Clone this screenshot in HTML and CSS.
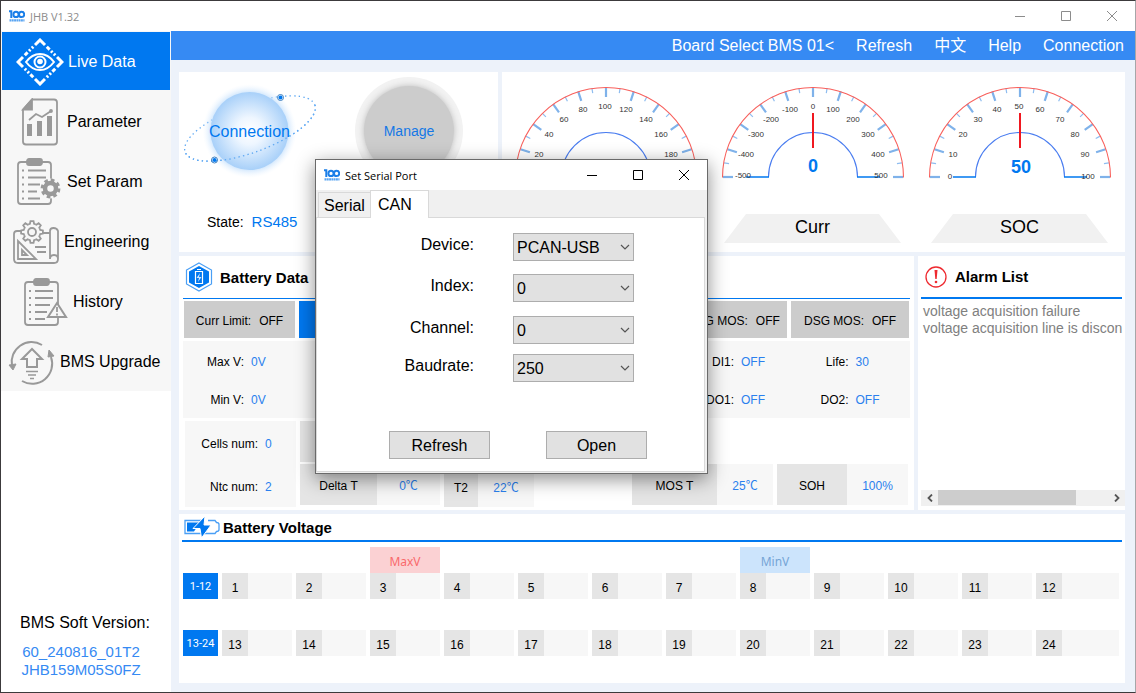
FILE: index.html
```html
<!DOCTYPE html>
<html lang="en">
<head>
<meta charset="utf-8">
<title>JHB V1.32</title>
<link rel="stylesheet" href="styles.css">
</head>
<body>
<svg class="defs" aria-hidden="true">
  <defs>
    <symbol id="logo" viewBox="0 0 16 12">
      <path d="M0 1.200h2.300V8" fill="none" stroke="#1b7fe8" stroke-width="2"/>
      <circle cx="7" cy="4.400" r="2.600" fill="none" stroke="#1b7fe8" stroke-width="2"/>
      <circle cx="12.600" cy="4.400" r="2.600" fill="none" stroke="#1b7fe8" stroke-width="2"/>
      <path d="M.5 10.400h15" stroke="#5aa5f2" stroke-width="2.200" stroke-dasharray="1.900 .4"/>
    </symbol>
    <symbol id="minimize" viewBox="0 0 12 12"><path d="M1 6.500h10" stroke="currentColor"/></symbol>
    <symbol id="maximize" viewBox="0 0 12 12"><path d="M1.500 1.500h9v9h-9z" fill="none" stroke="currentColor"/></symbol>
    <symbol id="close" viewBox="0 0 12 12"><path d="M1 1l10 10M11 1L1 11" stroke="currentColor"/></symbol>
    <symbol id="chevron" viewBox="0 0 10 6"><path d="M1 1l4 4 4-4" fill="none" stroke="#555" stroke-width="1.200"/></symbol>
    <path id="cog-tooth" d="M-3.250-7.850L-2.060-8.250-1.530-10.900H1.530L2.060-8.250 3.250-7.850"/>
    <symbol id="dial" viewBox="0 0 184 100">
      <g stroke="#7fb2ea" stroke-width="2.200">
        <path d="M2 92h10"/>
        <path d="M2 92h10" transform="rotate(18 92 92)"/>
        <path d="M2 92h10" transform="rotate(36 92 92)"/>
        <path d="M2 92h10" transform="rotate(54 92 92)"/>
        <path d="M2 92h10" transform="rotate(72 92 92)"/>
        <path d="M2 92h10" transform="rotate(90 92 92)"/>
        <path d="M2 92h10" transform="rotate(108 92 92)"/>
        <path d="M2 92h10" transform="rotate(126 92 92)"/>
        <path d="M2 92h10" transform="rotate(144 92 92)"/>
        <path d="M2 92h10" transform="rotate(162 92 92)"/>
        <path d="M2 92h10" transform="rotate(180 92 92)"/>
      </g>
      <g stroke="#8fbdf0" stroke-width="1.200">
        <path d="M2 92h5" transform="rotate(9 92 92)"/>
        <path d="M2 92h5" transform="rotate(27 92 92)"/>
        <path d="M2 92h5" transform="rotate(45 92 92)"/>
        <path d="M2 92h5" transform="rotate(63 92 92)"/>
        <path d="M2 92h5" transform="rotate(81 92 92)"/>
        <path d="M2 92h5" transform="rotate(99 92 92)"/>
        <path d="M2 92h5" transform="rotate(117 92 92)"/>
        <path d="M2 92h5" transform="rotate(135 92 92)"/>
        <path d="M2 92h5" transform="rotate(153 92 92)"/>
        <path d="M2 92h5" transform="rotate(171 92 92)"/>
      </g>
      <path d="M1.500 92.500a90.500 90 0 0 1 181 0" fill="none" stroke="#f8605c" stroke-width="1.100"/>
      <path d="M47.500 92a44.500 44.500 0 0 1 89 0" fill="none" stroke="#4a7df0" stroke-width="1.100"/>
      <path d="M25 92h23M136 92h23" stroke="#0078f0" stroke-width="1.300"/>
    </symbol>
    <radialGradient id="sphere">
      <stop offset="0" stop-color="#fff"/>
      <stop offset=".35" stop-color="#eef6ff"/>
      <stop offset="1" stop-color="#a8d0f9"/>
    </radialGradient>
    <radialGradient id="glow">
      <stop offset=".8" stop-color="#b5d8fb" stop-opacity=".7"/>
      <stop offset="1" stop-color="#e8f3ff" stop-opacity="0"/>
    </radialGradient>
  </defs>
</svg>

<div class="window">
  <header class="titlebar">
    <svg class="logo" aria-hidden="true"><use href="#logo"/></svg>
    <span class="titlebar-text">JHB V1.32</span>
    <div class="controls">
      <button class="control" aria-label="Minimize"><svg class="control-icon"><use href="#minimize"/></svg></button>
      <button class="control" aria-label="Maximize"><svg class="control-icon"><use href="#maximize"/></svg></button>
      <button class="control" aria-label="Close"><svg class="control-icon"><use href="#close"/></svg></button>
    </div>
  </header>

  <div class="body">
    <aside class="sidebar">
      <nav class="nav">
        <a class="nav-item active" href="#live">
          <svg class="nav-icon" viewBox="0 0 48 48" fill="none" stroke="#fff">
            <path d="M24 2l22 22-22 22L2 24z" stroke-width="3" stroke-dasharray="14.100 2.500 4 2 2 2 2 2.500" stroke-dashoffset="7"/>
            <path d="M10 24q6-8 14-8t14 8q-6 8-14 8t-14-8z" stroke-width="2"/>
            <circle cx="24" cy="24" r="5.500" stroke-width="2"/>
            <circle cx="24" cy="23.500" r="2.800" fill="#fff" stroke="none"/>
          </svg>Live Data</a>
        <a class="nav-item" href="#parameter">
          <svg class="nav-icon" viewBox="0 0 48 48" fill="none" stroke="#999" stroke-width="1.800">
            <path d="M17 1.500h22q3 0 3 3v39q0 3-3 3H11q-3 0-3-3v-32z"/>
            <path d="M17 1.500v10H8z" fill="#999"/>
            <path d="M12 26h5v12h-5zM22 23h5v15h-5zM32 18h5v20h-5z" fill="#999" stroke="none"/>
            <path d="M14 22l7-6 6 3 9-6"/>
            <circle cx="36" cy="13" r="1" fill="#999"/>
          </svg>Parameter</a>
        <a class="nav-item" href="#set">
          <svg class="nav-icon" viewBox="0 0 48 48" fill="none" stroke="#999" stroke-width="1.800">
            <rect x="3" y="4" width="33" height="42" rx="3"/>
            <rect x="12" y="1" width="15" height="6" rx="2" fill="#999"/>
            <path d="M13 12.500h18M13 19.500h18M13 26.500h12M13 33.500h9M13 40.500h12"/>
            <path d="M7 12.500h2M7 19.500h2M7 26.500h2M7 33.500h2M7 40.500h2"/>
            <circle cx="35.500" cy="30.500" r="10" fill="#f7f7f7" stroke="none"/>
            <circle cx="35.500" cy="30.500" r="5.500" stroke-width="4.500"/>
            <circle cx="35.500" cy="30.500" r="8.500" stroke-width="2.800" stroke-dasharray="3.700 2.976"/>
          </svg>Set Param</a>
        <a class="nav-item inset-12" href="#engineering">
          <svg class="nav-icon" viewBox="0 0 48 48" fill="none" stroke="#999" stroke-width="1.800">
            <path d="M9 13H5q-3 0-3 3v25q0 4 4 4h36q4 0 4-4t-4-4q-4 0-4 4V13q0-3 3.500-3t4.500 3v28M31 15h7"/>
            <path d="M6 23v18h18zM10 32v5h5z"/>
            <path d="M23 29h11M25 34h9"/>
            <circle cx="20" cy="14" r="10" fill="#f7f7f7" stroke="none"/>
            <g transform="translate(20 14)">
              <use href="#cog-tooth"/>
              <use href="#cog-tooth" transform="rotate(45)"/>
              <use href="#cog-tooth" transform="rotate(90)"/>
              <use href="#cog-tooth" transform="rotate(135)"/>
              <use href="#cog-tooth" transform="rotate(180)"/>
              <use href="#cog-tooth" transform="rotate(225)"/>
              <use href="#cog-tooth" transform="rotate(270)"/>
              <use href="#cog-tooth" transform="rotate(315)"/>
            </g>
            <circle cx="20" cy="14" r="4"/>
          </svg>Engineering</a>
        <a class="nav-item inset-20" href="#history">
          <svg class="nav-icon" viewBox="0 0 48 48" fill="none" stroke="#999" stroke-width="1.800">
            <rect x="4" y="4" width="33" height="43" rx="3"/>
            <rect x="13" y="1" width="15" height="6" rx="2" fill="#999"/>
            <path d="M14 13h18M14 20h18M14 27h15M14 34h12M14 41h10"/>
            <path d="M8 13h2M8 20h2M8 27h2M8 34h2M8 41h2"/>
            <path d="M36 25l9 14H27z" fill="#f7f7f7" stroke-width="2"/>
            <path d="M36 29v5M36 35.500v2"/>
          </svg>History</a>
        <a class="nav-item inset-8" href="#upgrade">
          <svg class="nav-icon" viewBox="0 0 48 48" fill="none" stroke="#999" stroke-width="2">
            <path d="M34 7A20 20 0 0 0 4 28M14 43a20 20 0 0 0 29-24"/>
            <path d="M1 27l7-1-3 6zM40 19l6-1-5-6z" fill="#999" stroke-width="1"/>
            <path d="M24 11L14 21h5v8h10v-8h5z"/>
            <path d="M18 33.500h12M20 37h8M22 40.500h4" stroke-width="1.600"/>
          </svg>BMS Upgrade</a>
      </nav>
      <div class="version">
        <div class="version-title">BMS Soft Version:</div>
        <div class="version-code">60_240816_01T2</div>
        <div class="version-code">JHB159M05S0FZ</div>
      </div>
    </aside>

    <div class="content">
      <nav class="toolbar">
        <a class="toolbar-link" href="#board">Board Select BMS 01&lt;</a>
        <a class="toolbar-link" href="#refresh">Refresh</a>
        <a class="toolbar-link" href="#lang" lang="zh">中文</a>
        <a class="toolbar-link" href="#help">Help</a>
        <a class="toolbar-link" href="#connection">Connection</a>
      </nav>

      <main class="main">
        <div class="row row-top">
          <section class="panel connect">
            <div class="connect-buttons">
              <button class="orbit">
                <svg class="orbit-art" viewBox="0 0 140 108" fill="none" aria-hidden="true">
                  <ellipse cx="70" cy="51.500" rx="69" ry="24" transform="rotate(-20 70 51.500)" stroke="#5ea8f3" stroke-width="1.300" stroke-dasharray="1.400 3.200"/>
                  <circle cx="69.500" cy="54" r="47" fill="url(#glow)"/>
                  <circle cx="69.500" cy="54" r="39" fill="url(#sphere)"/>
                  <path d="M139 51.500a69 24 0 0 1-138 0" transform="rotate(-20 70 51.500)" stroke="#5ea8f3" stroke-width="1.300" stroke-dasharray="1.400 3.200"/>
                  <g fill="#0078f0"><circle cx="100.500" cy="20.500" r="2"/><circle cx="34.500" cy="83" r="2"/></g>
                  <g stroke="#3c7fc0"><circle cx="100.500" cy="20.500" r="3"/><circle cx="34.500" cy="83" r="3"/></g>
                </svg>
                <span class="orbit-text">Connection</span>
              </button>
              <button class="manage"><span class="manage-disc">Manage</span></button>
            </div>
            <div class="state"><span>State:</span><span class="state-value">RS485</span></div>
          </section>

          <section class="panel gauges">
            <div class="gauge">
              <svg class="gauge-dial" viewBox="0 0 184 100">
                <use href="#dial"/>
                <g class="scale"><text x="25" y="72">20</text><text x="35" y="52">40</text><text x="50" y="37">60</text><text x="69" y="27">80</text><text x="91" y="24">100</text><text x="112" y="27">120</text><text x="132" y="37">140</text><text x="147" y="52">160</text><text x="157" y="72">180</text></g>
              </svg>
            </div>
            <div class="gauge">
              <svg class="gauge-dial" viewBox="0 0 184 100">
                <use href="#dial"/>
                <path class="needle" d="M92 28v35"/>
                <g class="scale"><text x="22" y="93">-500</text><text x="25" y="72">-400</text><text x="35" y="52">-300</text><text x="50" y="37">-200</text><text x="69" y="27">-100</text><text x="92" y="24">0</text><text x="112" y="27">100</text><text x="132" y="37">200</text><text x="147" y="52">300</text><text x="157" y="72">400</text><text x="160" y="93">500</text></g>
                <text class="reading" x="92" y="87">0</text>
              </svg>
              <div class="gauge-name">Curr</div>
            </div>
            <div class="gauge">
              <svg class="gauge-dial" viewBox="0 0 184 100">
                <use href="#dial"/>
                <path class="needle" d="M92 28v35"/>
                <g class="scale"><text x="22" y="94">0</text><text x="25" y="72">10</text><text x="35" y="52">20</text><text x="50" y="37">30</text><text x="69" y="27">40</text><text x="91" y="24">50</text><text x="112" y="27">60</text><text x="132" y="37">70</text><text x="147" y="52">80</text><text x="157" y="72">90</text><text x="160" y="94">100</text></g>
                <text class="reading" x="93" y="88">50</text>
              </svg>
              <div class="gauge-name">SOC</div>
            </div>
          </section>
        </div>

        <div class="row row-mid">
          <section class="panel battery">
            <h2 class="heading">
              <svg class="hex-icon" viewBox="0 0 28 30" fill="none" aria-hidden="true">
                <path d="M14 1l12.500 7v14L14 29 1.500 22V8z" stroke="#4a9ff5" stroke-width="1.200"/>
                <path d="M14 4l10 5.500v11L14 26 4 20.500v-11z" fill="#0078f0"/>
                <path d="M12 7.500h4M10.500 9.500h7v12h-7z" stroke="#fff" stroke-width="1.200"/>
                <path d="M15 11l-3.500 5H14l-1 4 3.500-5H14z" fill="#cfe6ff"/>
              </svg>Battery Data</h2>
            <div class="tiles">
              <div class="tile"><span>Curr Limit:</span><span>OFF</span></div>
              <div class="tile on"></div>
              <div class="tile"></div>
              <div class="tile"></div>
              <div class="tile"><span>CHG MOS:</span><span>OFF</span></div>
              <div class="tile"><span>DSG MOS:</span><span>OFF</span></div>
            </div>
            <div class="facts">
              <div class="fact"><span>Max V:</span><span class="value">0V</span></div>
              <div class="fact"></div><div class="fact"></div><div class="fact"></div>
              <div class="fact"><span>DI1:</span><span class="value">OFF</span></div>
              <div class="fact"><span>Life:</span><span class="value">30</span></div>
              <div class="fact"><span>Min V:</span><span class="value">0V</span></div>
              <div class="fact"></div><div class="fact"></div><div class="fact"></div>
              <div class="fact"><span>DO1:</span><span class="value">OFF</span></div>
              <div class="fact"><span>DO2:</span><span class="value">OFF</span></div>
            </div>
            <div class="metrics">
              <div class="counts">
                <div class="count"><span>Cells num:</span><span class="value">0</span></div>
                <div class="count"><span>Ntc num:</span><span class="value">2</span></div>
              </div>
              <div class="stack">
                <div class="metric delta"><span class="metric-name"></span><span class="metric-value"></span></div>
                <div class="metric delta"><span class="metric-name">Delta T</span><span class="metric-value">0℃</span></div>
              </div>
              <div class="stack stack-temp">
                <div class="metric temp"><span class="metric-name"></span><span class="metric-value"></span></div>
                <div class="metric temp temp-tall"><span class="metric-name">T2</span><span class="metric-value">22℃</span></div>
              </div>
              <div class="stack stack-end">
                <div class="metric mos"><span class="metric-name">MOS T</span><span class="metric-value">25℃</span></div>
              </div>
              <div class="stack">
                <div class="metric soh"><span class="metric-name">SOH</span><span class="metric-value">100%</span></div>
              </div>
            </div>
          </section>

          <section class="panel alarms">
            <h2 class="heading heading-thick">
              <svg class="alarm-icon" viewBox="0 0 22 22" aria-hidden="true">
                <circle cx="11" cy="11" r="10" fill="none" stroke="#ee2a30" stroke-width="1.300"/>
                <path d="M9.500 4h3L11.700 13h-1.400z" fill="#ee2a30"/><circle cx="11" cy="16" r="1.300" fill="#ee2a30"/>
              </svg>Alarm List</h2>
            <div class="alarm-list">
              <div class="alarm">voltage acquisition failure</div>
              <div class="alarm">voltage acquisition line is discon</div>
            </div>
            <div class="scrollbar">
              <button class="scroll-button" aria-label="Scroll left"><svg class="scroll-arrow" viewBox="0 0 8 8"><path d="M6 .5L2.500 4 6 7.500" fill="none" stroke="#555" stroke-width="1.800"/></svg></button>
              <div class="scroll-track"><div class="scroll-thumb"></div></div>
              <button class="scroll-button" aria-label="Scroll right"><svg class="scroll-arrow" viewBox="0 0 8 8"><path d="M2 .5L5.500 4 2 7.500" fill="none" stroke="#555" stroke-width="1.800"/></svg></button>
            </div>
          </section>
        </div>

        <section class="panel voltage">
          <h2 class="heading heading-thick heading-low">
            <svg class="charge-icon" viewBox="0 0 36 22" fill="none" aria-hidden="true">
              <path d="M18 4.500H1v13h16M24 4.500h7l1.500 2q2.500 0 2.500 2v5q0 2-2.500 2l-1.500 2H20" stroke="#4a9ff5" stroke-width="1.300"/>
              <path d="M3 6.500h13l-6 9H3z" fill="#0078f0"/>
              <path d="M21 0L9 12.500h7L17.500 22 27 9h-7z" fill="#0078f0" stroke="#fff"/>
            </svg>Battery Voltage</h2>
          <div class="cell-rows">
            <div class="cells">
              <div class="marker marker-max">MaxV</div>
              <div class="marker marker-min">MinV</div>
            </div>
            <div class="cells">
              <div class="range">1-12</div>
              <div class="cell"><span class="cell-no">1</span></div>
              <div class="cell"><span class="cell-no">2</span></div>
              <div class="cell"><span class="cell-no">3</span></div>
              <div class="cell"><span class="cell-no">4</span></div>
              <div class="cell"><span class="cell-no">5</span></div>
              <div class="cell"><span class="cell-no">6</span></div>
              <div class="cell"><span class="cell-no">7</span></div>
              <div class="cell"><span class="cell-no">8</span></div>
              <div class="cell"><span class="cell-no">9</span></div>
              <div class="cell"><span class="cell-no">10</span></div>
              <div class="cell"><span class="cell-no">11</span></div>
              <div class="cell"><span class="cell-no">12</span></div>
            </div>
            <div class="cells cells-second">
              <div class="range">13-24</div>
              <div class="cell"><span class="cell-no">13</span></div>
              <div class="cell"><span class="cell-no">14</span></div>
              <div class="cell"><span class="cell-no">15</span></div>
              <div class="cell"><span class="cell-no">16</span></div>
              <div class="cell"><span class="cell-no">17</span></div>
              <div class="cell"><span class="cell-no">18</span></div>
              <div class="cell"><span class="cell-no">19</span></div>
              <div class="cell"><span class="cell-no">20</span></div>
              <div class="cell"><span class="cell-no">21</span></div>
              <div class="cell"><span class="cell-no">22</span></div>
              <div class="cell"><span class="cell-no">23</span></div>
              <div class="cell"><span class="cell-no">24</span></div>
            </div>
          </div>
        </section>
      </main>
    </div>
  </div>
</div>

<section class="dialog" role="dialog" aria-labelledby="dialog-title">
  <header class="dialog-title">
    <svg class="logo" aria-hidden="true"><use href="#logo"/></svg>
    <span class="titlebar-text" id="dialog-title">Set Serial Port</span>
    <div class="controls">
      <button class="control" aria-label="Minimize"><svg class="control-icon"><use href="#minimize"/></svg></button>
      <button class="control" aria-label="Maximize"><svg class="control-icon"><use href="#maximize"/></svg></button>
      <button class="control" aria-label="Close"><svg class="control-icon"><use href="#close"/></svg></button>
    </div>
  </header>
  <div class="tabs" role="tablist">
    <button class="tab" role="tab" aria-selected="false">Serial</button>
    <button class="tab selected" role="tab" aria-selected="true">CAN</button>
  </div>
  <form class="sheet">
    <div class="fields">
      <label class="field-label" for="device">Device:</label>
      <div class="field"><select class="select" id="device"><option>PCAN-USB</option></select><svg class="chevron"><use href="#chevron"/></svg></div>
      <label class="field-label" for="index">Index:</label>
      <div class="field"><select class="select" id="index"><option>0</option></select><svg class="chevron"><use href="#chevron"/></svg></div>
      <label class="field-label" for="channel">Channel:</label>
      <div class="field"><select class="select" id="channel"><option>0</option></select><svg class="chevron"><use href="#chevron"/></svg></div>
      <label class="field-label" for="baudrate">Baudrate:</label>
      <div class="field"><select class="select" id="baudrate"><option>250</option></select><svg class="chevron"><use href="#chevron"/></svg></div>
    </div>
    <div class="actions">
      <button class="action" type="button">Refresh</button>
      <button class="action" type="button">Open</button>
    </div>
  </form>
</section>
</body>
</html>
```

FILE: styles.css
```css
* { box-sizing: border-box; }

body {
  margin: 0;
  font-family: "Liberation Sans", "Noto Sans CJK SC", sans-serif;
  font-size: 16px;
  color: #000;
}

button {
  margin: 0;
  padding: 0;
  border: 0;
  background: none;
  font: inherit;
  color: inherit;
}

a { color: inherit; text-decoration: none; }

.defs { position: absolute; width: 0; height: 0; }

/* Window frame */
.window {
  display: flex;
  flex-direction: column;
  min-height: 100vh;
  border: 1px solid #3c3a3c;
  border-right-color: #a6a6a8;
  background: #fff;
}

.titlebar {
  display: flex;
  align-items: center;
  height: 30px;
  padding-left: 8px;
  color: #8c8c8c;
}

.logo { width: 16px; height: 12px; }

.titlebar-text {
  margin-left: 5px;
  font-family: "Open Sans", sans-serif;
  font-size: 11px;
}

.controls { display: flex; margin-left: auto; }

.control {
  display: grid;
  place-items: center;
  width: 46px;
  height: 29px;
}

.control-icon { width: 12px; height: 12px; }

.body { display: flex; flex: 1; }

/* Sidebar */
.sidebar {
  display: flex;
  flex-direction: column;
  flex: none;
  width: 170px;
}

.nav { padding-top: 1px; background: #f7f7f7; }

.nav-item {
  display: flex;
  align-items: center;
  gap: 4px;
  height: 60px;
  padding-top: 2px;
  padding-left: 14px;
}

.nav-item.active {
  height: 58px;
  margin: 0 1px 1px;
  background: #0078f0;
  color: #fff;
}

.inset-8 { padding-left: 7px; }
.inset-12 { padding-left: 11px; }
.inset-20 { padding-left: 20px; }

.nav-icon { flex: none; width: 48px; height: 48px; }

.version {
  margin-top: auto;
  padding: 0 10px 13px 0;
  text-align: center;
}

.version-title { padding-left: 8px; margin-bottom: 10px; line-height: 20px; }

.version-code { font-size: 15px; line-height: 18px; color: #368af3; }

/* Main column */
.content {
  display: flex;
  flex-direction: column;
  flex: 1;
  min-width: 0;
  background: #edf2fa;
}

.toolbar {
  display: flex;
  justify-content: flex-end;
  align-items: center;
  gap: 22px;
  height: 29px;
  padding-right: 11px;
  background: #368af3;
  color: #fff;
}

.toolbar-link { line-height: 20px; }

.main {
  display: flex;
  flex-direction: column;
  flex: 1;
  gap: 4px;
  padding: 12px 10px 9px 8px;
}

.row { display: grid; gap: 4px; }
.row-top { grid-template-columns: minmax(0, 319fr) minmax(0, 623fr); }
.row-mid { grid-template-columns: minmax(0, 735fr) minmax(0, 207fr); }

.panel { background: #fff; }

/* Connection panel */
.connect { padding: 5px 0 20px; }

.connect-buttons {
  display: grid;
  grid-template-columns: 141fr 178fr;
  justify-items: center;
}

.orbit { display: grid; place-items: center; }
.orbit-art { grid-area: 1 / 1; width: 140px; height: 108px; }
.orbit-text { grid-area: 1 / 1; padding-top: 1px; color: #0078f0; }

.manage {
  display: grid;
  place-items: center;
  width: 108px;
  height: 108px;
  border-radius: 50%;
  background: #f2f2f2;
}

.manage-disc {
  display: grid;
  place-items: center;
  width: 90px;
  height: 90px;
  border-radius: 50%;
  background: #ccc;
  box-shadow: 0 0 6px #bbb;
  font-size: 14px;
  color: #1478e6;
}

.state {
  display: flex;
  align-items: center;
  gap: 8px;
  padding: 27px 0 0 28px;
  font-size: 14px;
  line-height: 20px;
}

.state-value { font-size: 15px; color: #0078f0; }

/* Gauges */
.gauges {
  display: grid;
  grid-template-columns: repeat(3, minmax(0, 1fr));
  padding: 13px 2px 9px 0;
}

.gauge { display: flex; flex-direction: column; align-items: center; gap: 29px; }

.gauge-dial { width: 184px; height: 100px; }

.scale {
  font-size: 8px;
  fill: #333;
  text-anchor: middle;
}

.needle { stroke: #f01820; stroke-width: 2px; }

.reading {
  font-size: 18px;
  font-weight: bold;
  fill: #0078f0;
  text-anchor: middle;
}

.gauge-name {
  width: 177px;
  height: 29px;
  background: #f1f1f1;
  clip-path: polygon(22px 0, 155px 0, 100% 100%, 0 100%);
  font-size: 18px;
  line-height: 26px;
  text-align: center;
}

/* Headings */
.heading {
  display: flex;
  align-items: center;
  height: 43px;
  margin: 0;
  border-bottom: 1px solid #0078f0;
  font-size: 15px;
  font-weight: bold;
}

.heading-thick { border-bottom-width: 2px; }

.hex-icon { width: 28px; height: 30px; margin: 0 7px 0 2px; }
.alarm-icon { width: 22px; height: 22px; margin: 0 8px 0 4px; }
.charge-icon { width: 36px; height: 22px; margin: 0 3px 0 2px; }

/* Battery data */
.battery {
  padding: 0 4px 3px;
  font-size: 12px;
}

.value, .metric-value { color: #2a80ee; }

.tiles {
  display: grid;
  grid-template-columns: 111fr repeat(3, 123fr) 107fr 118fr;
  gap: 4px;
  margin: 2px 1px 3px;
}

.tile {
  display: flex;
  justify-content: center;
  align-items: center;
  gap: 8px;
  height: 37px;
  padding-top: 2px;
  background: #ccc;
  white-space: nowrap;
}

.tile.on { background: #0078f0; }

.facts {
  display: grid;
  grid-template-columns: 129fr 123fr 123fr 123fr 113fr 116fr;
  grid-auto-rows: 38px;
  height: 77px;
  background: #f7f7f7;
}

.fact, .count {
  display: grid;
  grid-template-columns: 1fr 1fr;
  align-items: center;
  gap: 7px;
  padding-top: 3px;
}

.fact > :first-child, .count > :first-child { text-align: right; }

.metrics { display: flex; gap: 4px; margin: 3px 2px 0; }

.counts {
  width: 111px;
  background: #f7f7f7;
}

.count { grid-template-columns: 73px 1fr; height: 43px; }

.stack {
  display: flex;
  flex-direction: column;
  justify-content: flex-end;
  gap: 2px;
  padding-bottom: 2px;
}

.stack-temp { padding-bottom: 0; }
.stack-end { margin-left: auto; }

.metric { display: flex; height: 41px; line-height: 44px; text-align: center; }
.temp-tall { height: 43px; line-height: 48px; }
.metric-name { background: #e5e5e5; }
.metric-value { background: #f7f7f7; }

.delta .metric-name { width: 77px; }
.delta .metric-value { width: 63px; }
.temp .metric-name { width: 34px; }
.temp .metric-value { width: 56px; }
.mos .metric-name { width: 85px; }
.mos .metric-value { width: 56px; }
.soh .metric-name { width: 70px; }
.soh .metric-value { width: 61px; }

.metric-name, .metric-value { height: 100%; }

/* Alarm list */
.alarms {
  display: flex;
  flex-direction: column;
  padding: 0 0 4px 3px;
}

.alarms .heading { margin-right: 3px; }

.alarm-list {
  flex: 1;
  padding: 4px 0 0 2px;
  overflow: hidden;
  font-size: 14px;
  line-height: 17px;
  color: #808080;
  white-space: nowrap;
}

.scrollbar {
  display: flex;
  height: 16px;
  background: #f0f0f0;
}

.scroll-button { display: grid; place-items: center; width: 17px; }
.scroll-arrow { width: 8px; height: 8px; }
.scroll-track { flex: 1; }
.scroll-thumb { width: 81%; height: 15px; background: #cdcdcd; }

/* Battery voltage */
.voltage { flex: 1; padding: 0 3px 27px; }

.heading-low { height: 28px; }

.cell-rows {
  margin: 5px 3px 0 1px;
  font-size: 12px;
  line-height: 30px;
  text-align: center;
}

.cells {
  display: grid;
  grid-template-columns: 35px repeat(11, 70fr) 83fr;
  grid-auto-rows: 26px;
  column-gap: 4px;
}

.cells-second { margin-top: 31px; }

.marker { grid-row: 1; font-family: "Noto Sans", sans-serif; }
.marker-max { grid-column: 4; background: #fbd1d3; color: #f96a6c; }
.marker-min { grid-column: 9; background: #cce4fc; color: #76a5d6; }

.range {
  background: #0078f0;
  color: #fff;
  font-family: Roboto, sans-serif;
  font-size: 11px;
  line-height: 27px;
}

.cell { background: #f7f7f7; }
.cell-no { display: block; width: 26px; height: 26px; background: #e5e5e5; }

/* Serial port dialog, floating over the window */
.dialog {
  position: absolute;
  left: 315px;
  top: 159px;
  width: 393px;
  border: 1px solid #6a6a6a;
  background: #f0f0f0;
  box-shadow: 0 5px 18px rgba(0, 0, 0, 0.45);
}

.dialog-title {
  display: flex;
  align-items: center;
  height: 30px;
  padding-left: 8px;
  background: #fff;
}

.tabs { display: flex; align-items: flex-end; height: 27px; padding-left: 2px; }

.tab {
  height: 25px;
  padding: 0 5px;
  border: 1px solid #d9d9d9;
  border-bottom: 0;
  background: #f0f0f0;
  line-height: 26px;
}

.tab.selected {
  z-index: 1;
  height: 28px;
  margin: 0 0 -1px -1px;
  padding: 0 16px 0 7px;
  background: #fff;
}

.sheet {
  margin: 0 2px 1px 0;
  padding: 15px 56px 12px 72px;
  border: 1px solid #d9d9d9;
  background: #fff;
}

.fields {
  display: grid;
  grid-template-columns: 85px 121px;
  grid-template-rows: 41px 42px 38px 28px;
  column-gap: 39px;
}

.field-label { line-height: 24px; text-align: right; }

.field { display: grid; height: 28px; align-items: center; }

.select {
  grid-area: 1 / 1;
  width: 100%;
  height: 28px;
  padding: 0 3px;
  border: 1px solid #adadad;
  border-radius: 0;
  background: #e1e1e1;
  appearance: none;
  font: inherit;
  color: inherit;
}

.chevron {
  grid-area: 1 / 1;
  justify-self: end;
  width: 10px;
  height: 6px;
  margin-right: 4px;
  pointer-events: none;
}

.actions { display: flex; gap: 56px; margin-top: 49px; }

.action {
  width: 101px;
  height: 28px;
  padding-top: 1px;
  border: 1px solid #adadad;
  background: #e1e1e1;
}
```
